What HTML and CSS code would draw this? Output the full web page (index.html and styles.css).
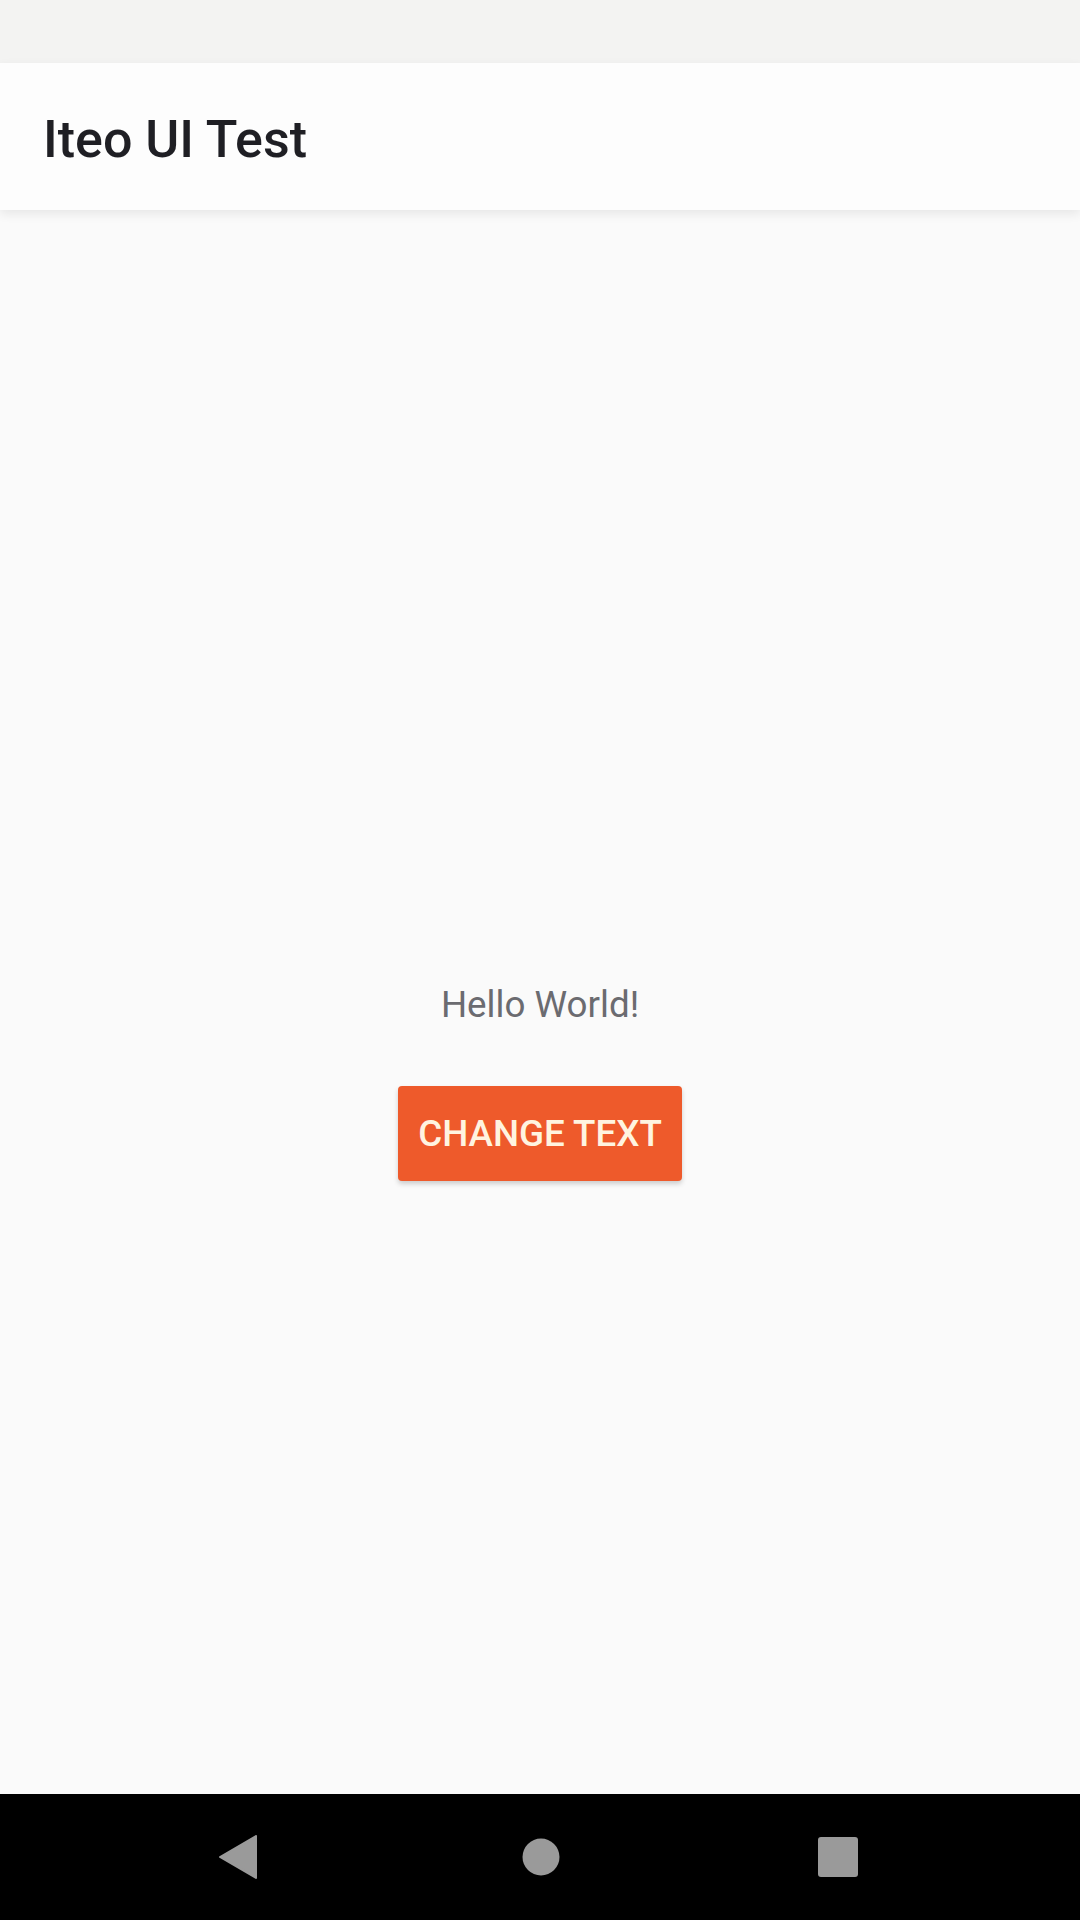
FILE: index.html
```html
<!DOCTYPE html>
<html>
<head>
<meta charset="utf-8">
<link rel="stylesheet" href="styles.css">
</head>
<body>
<div class="screen">
  <div class="statusbar"></div>
  <header class="appbar"><h1 class="title">Iteo UI Test</h1></header>
  <main class="content">
    <p class="hello">Hello World!</p>
    <button class="btn">CHANGE TEXT</button>
  </main>
  <nav class="navbar">
    <svg class="nav-icon" width="40" height="44" viewBox="0 0 40 44"><path d="M38 1 L38 43 L2 22 Z" fill="#9a9a9a" stroke="#9a9a9a" stroke-width="2" stroke-linejoin="round"/></svg>
    <svg class="nav-icon" width="40" height="40" viewBox="0 0 40 40"><circle cx="20" cy="20" r="18.5" fill="#9a9a9a"/></svg>
    <svg class="nav-icon" width="40" height="40" viewBox="0 0 40 40"><rect x="0" y="0" width="40" height="40" rx="3" fill="#9a9a9a"/></svg>
  </nav>
</div>
</body>
</html>
```

FILE: styles.css
```css
html, body {
  margin: 0;
  padding: 0;
}
body {
  width: 1080px;
  height: 1920px;
  overflow: hidden;
  background: #fafafa;
  font-family: Roboto, "Liberation Sans", sans-serif;
}
.screen {
  display: flex;
  flex-direction: column;
  height: 1920px;
}
.statusbar {
  height: 63px;
  background: #f3f3f2;
  flex: none;
}
.appbar {
  height: 147px;
  flex: none;
  background: #fdfdfd;
  display: flex;
  align-items: center;
  padding-left: 43px;
  box-shadow: 0 4px 10px rgba(0,0,0,0.08);
  position: relative;
  z-index: 1;
}
.title {
  margin: 0;
  font-size: 52px;
  font-weight: 500;
  color: #1f1f24;
  letter-spacing: 0;
  padding-top: 5px;
}
.content {
  flex: 1;
  display: flex;
  flex-direction: column;
  align-items: center;
  padding-top: 773px;
  background: #fafafa;
}
.hello {
  margin: 0;
  font-size: 36.75px;
  line-height: 44px;
  color: #6b6b70;
}
.btn {
  margin-top: 59px;
  width: 284px;
  height: 95px;
  border: none;
  border-radius: 4px;
  background: #ee5a2b;
  color: #fff4e0;
  font-family: Roboto, "Liberation Sans", sans-serif;
  font-size: 36.75px;
  font-weight: 500;
  letter-spacing: 0;
  box-shadow: 0 3px 5px rgba(0,0,0,0.18);
  padding: 0;
}
.navbar {
  height: 126px;
  flex: none;
  background: #000;
  display: grid;
  grid-template-columns: 218px 40px 263px 40px 257px 40px 1fr;
  align-items: center;
}
.nav-icon:nth-child(1) { grid-column: 2; }
.nav-icon:nth-child(2) { grid-column: 4; }
.nav-icon:nth-child(3) { grid-column: 6; }
```
